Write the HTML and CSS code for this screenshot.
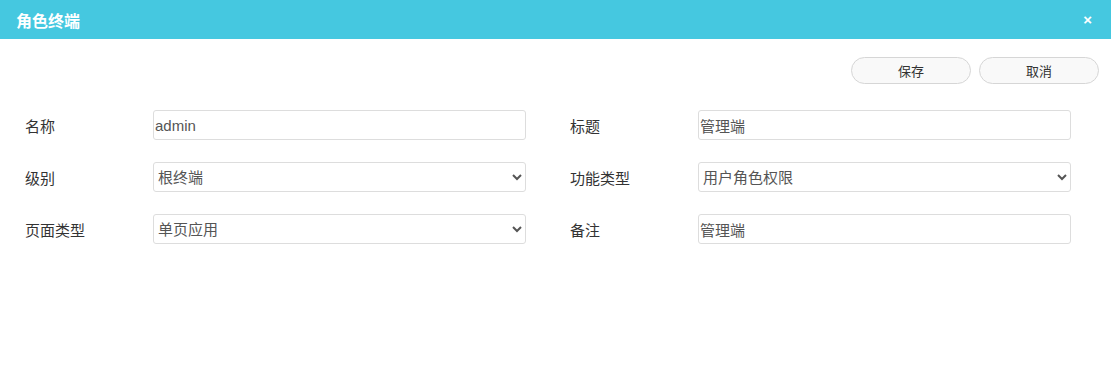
FILE: index.html
```html
<html>
<head>
    <meta charset="UTF-8">
    <title>角色终端</title>
    <link rel="stylesheet" href="styles.css">
</head>
<body>
    <div class="dialog-header">
        <span class="dialog-title">角色终端</span>
        <span class="dialog-close">&times;</span>
    </div>

    <div class="toolbar">
        <button class="btn">保存</button>
        <button class="btn">取消</button>
    </div>

    <div class="form-grid">
        <div class="form-row">
            <label>名称</label>
            <input type="text" value="admin">
        </div>
        <div class="form-row">
            <label>标题</label>
            <input type="text" value="管理端">
        </div>
        <div class="form-row">
            <label>级别</label>
            <select><option>根终端</option></select>
        </div>
        <div class="form-row">
            <label>功能类型</label>
            <select><option>用户角色权限</option></select>
        </div>
        <div class="form-row">
            <label>页面类型</label>
            <select><option>单页应用</option></select>
        </div>
        <div class="form-row">
            <label>备注</label>
            <input type="text" value="管理端">
        </div>
    </div>
</body>
</html>
```

FILE: styles.css
```css
body {
    margin: 0;
    font-family: "Liberation Sans", "Noto Sans CJK SC", sans-serif;
    background: #fff;
    color: #333;
}

.dialog-header {
    height: 39px;
    background-color: #45c8e0;
    display: flex;
    align-items: center;
    justify-content: space-between;
    padding: 0 19px 0 16px;
}

.dialog-title {
    color: #fff;
    font-size: 16px;
    font-weight: bold;
}

.dialog-close {
    color: #fff;
    font-size: 15px;
    font-weight: bold;
}

.toolbar {
    display: flex;
    justify-content: flex-end;
    gap: 8px;
    padding: 18px 12px 0 0;
}

.btn {
    width: 120px;
    height: 27px;
    border: 1px solid #d6d6d6;
    border-radius: 14px;
    background: #f9f9f9;
    color: #333;
    font-family: inherit;
    font-size: 13px;
    cursor: pointer;
}

.form-grid {
    display: grid;
    grid-template-columns: 501px 501px;
    column-gap: 44px;
    row-gap: 22px;
    padding: 26px 0 0 25px;
}

.form-row {
    display: flex;
    align-items: center;
}

label {
    width: 128px;
    font-size: 15px;
    color: #333;
}

input,
select {
    width: 373px;
    height: 30px;
    box-sizing: border-box;
    border: 1px solid #ddd;
    border-radius: 3px;
    padding: 0 0 0 1px;
    font-family: inherit;
    font-size: 15px;
    color: #555;
    background: #fff;
}

select {
    padding-left: 0;
}
```
